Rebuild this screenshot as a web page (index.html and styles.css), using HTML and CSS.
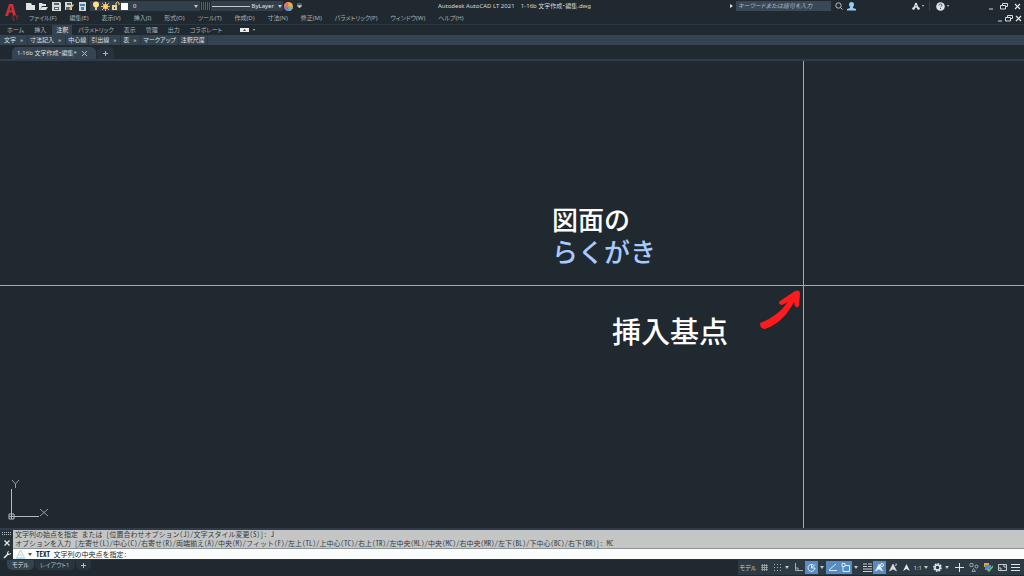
FILE: index.html
```html
<!DOCTYPE html>
<html lang="ja">
<head>
<meta charset="utf-8">
<title>Autodesk AutoCAD LT 2021</title>
<link rel="stylesheet" href="styles.css">
</head>
<body>
<div class="app">
  <header class="top">
    <button class="logo" aria-label="アプリケーション"><svg width="16" height="20" viewBox="0 0 16 20"><path d="M1 14 5 2h4l3 11-3 1-1-4-3 1-1 3zM5.500 8.500 7.500 8 7 4z" fill="#c92f36" fill-rule="evenodd"/><path d="M9 14v4h2M11.500 14h3M13 14v4" stroke="#9d2630" fill="none"/></svg></button>
    <div class="top-rows">
      <div class="titlebar">
        <div class="quick">
          <button aria-label="新規"><svg width="9" height="9" viewBox="0 0 9 9"><path d="M0 1h5l1 2h3v5H0z" fill="#dfe3e4"/></svg></button>
          <button aria-label="開く"><svg width="9" height="9" viewBox="0 0 9 9"><path d="M0 8V1h3l1 1h3v2H3L1 8zM3 5h6L7 8H1z" fill="#dfe3e4"/></svg></button>
          <button aria-label="上書き保存"><svg width="9" height="9" viewBox="0 0 9 9"><path d="M0 0h8l1 1v8H0z" fill="#d5d9da"/><path d="M2 1h5v2H2zM2 5h5v3H2z" fill="#59636b"/><path d="M3 6h3v1H3z" fill="#eee"/></svg></button>
          <button aria-label="名前を付けて保存"><svg width="9" height="9" viewBox="0 0 9 9"><path d="M0 0h7v8H0z" fill="#d5d9da"/><path d="M2 1h4v2H2zM1 5h4v3H1z" fill="#59636b"/><path d="m4 7 4-5 1 1-4 5z" fill="#eab45a"/></svg></button>
          <button aria-label="印刷"><svg width="9" height="9" viewBox="0 0 9 9"><path d="M1 0h7v9H1z" fill="#d5d9da"/><path d="M2 2h5v2H2zM3 5h3v3H3z" fill="#3c84bd"/></svg></button>
        </div>
        <button class="layer">
          <svg width="8" height="10" viewBox="0 0 8 10"><circle cx="4" cy="3.500" r="3" fill="#ffe18a"/><path d="M3 6h2v3H3z" fill="#d8ccb0"/></svg>
          <svg width="9" height="9" viewBox="0 0 9 9"><path d="M4.500 0v9M0 4.500h9M1 1l7 7M8 1 1 8" stroke="#efb646"/><circle cx="4.500" cy="4.500" r="2.500" fill="#ffd060"/></svg>
          <svg width="9" height="10" viewBox="0 0 9 10"><path d="M1 4h5v5H1z" fill="#efd396"/><path d="M5 4V2q1.500-2 3 0v2" stroke="#efd396" fill="none"/><path d="M3 6h1v2H3z" fill="#59482a"/></svg>
          <svg width="7" height="7" viewBox="0 0 7 7"><path d="M0 0h7v7H0z" fill="#fff"/></svg>
          <span class="grow">0</span><i class="caret"></i>
        </button>
        <svg width="9" height="8" viewBox="0 0 9 8"><path d="M0 1h9M0 3h9M0 5h9M0 7h9" stroke="#8a949b" stroke-dasharray="1 1"/></svg>
        <button class="linetype"><span class="rule"></span><span>ByLayer</span><i class="caret"></i></button>
        <svg width="9" height="9" viewBox="0 0 9 9"><circle cx="4.500" cy="4.500" r="4.500" fill="#f0a64c"/><path d="M4.500 4.500 0 5a4.500 4.500 0 0 1 4-5z" fill="#e66c6b"/><path d="M4.500 4.500 0 5a4.500 4.500 0 0 0 5 4z" fill="#6a7de0"/><path d="M4.500 4.500 5 9a4.500 4.500 0 0 0 4-4z" fill="#59bfa0"/></svg>
        <svg class="more" width="5" height="6" viewBox="0 0 5 6"><path d="M0 1h5M0 2.500h5L2.500 5z" fill="#cbd0d3" stroke="#cbd0d3" stroke-width=".5"/></svg>
        <h1 class="title">Autodesk AutoCAD LT 2021 &nbsp;&nbsp; 1-16b 文字作成・編集.dwg</h1>
        <div class="right-tools">
          <i class="play"></i>
          <input class="search" type="text" placeholder="キーワードまたは語句を入力" aria-label="キーワード検索">
          <button aria-label="検索"><svg width="8" height="8" viewBox="0 0 8 8"><circle cx="3.500" cy="3.500" r="2.700" fill="none" stroke="#b9c0c3"/><path d="m5.500 5.500 2 2" stroke="#b9c0c3"/></svg></button>
          <button aria-label="サインイン"><svg width="9" height="9" viewBox="0 0 9 9"><circle cx="4.500" cy="2.500" r="2.500" fill="#91cff4"/><path d="M3 4h3v2l3 1v1.500H0V7l3-1z" fill="#91cff4"/></svg></button>
          <button class="store" aria-label="App Store"><svg width="8" height="8" viewBox="0 0 8 8"><path d="M4 1 1.500 7M4 1l2.500 6M2.500 5h3" stroke="#e2e6e8" stroke-width="1.300" fill="none"/><circle cx="1.500" cy="6.500" r="1.300" fill="#e2e6e8"/><circle cx="6.500" cy="6.500" r="1.300" fill="#e2e6e8"/></svg></button><i class="caret tiny"></i>
          <span class="sep"></span>
          <button aria-label="ヘルプ"><svg width="9" height="9" viewBox="0 0 9 9"><circle cx="4.500" cy="4.500" r="4.300" fill="#dfe3e5"/><path d="M3 3.500Q3.200 2 4.500 2T6 3.300Q6 4.200 4.500 5M4.500 6v1" stroke="#46515b" fill="none"/></svg></button><i class="caret tiny"></i>
        </div>
        <div class="winbtns">
          <button aria-label="最小化"><svg width="6" height="7" viewBox="0 0 6 7"><path d="M1 6h4" stroke="#d6dadc"/></svg></button>
          <button aria-label="元に戻す"><svg width="8" height="7" viewBox="0 0 8 7"><path d="M2.500 2V.500h5v3H6M.500 2.500h5v3.500h-5z" fill="none" stroke="#d6dadc"/></svg></button>
          <button aria-label="閉じる"><svg width="7" height="7" viewBox="0 0 7 7"><path d="m1 1 5 5M6 1 1 6" stroke="#e8ebec" stroke-width="1.200"/></svg></button>
        </div>
      </div>
      <nav class="menubar">
        <button>ファイル(F)</button><button>編集(E)</button><button>表示(V)</button><button>挿入(I)</button><button>形式(O)</button><button>ツール(T)</button><button>作成(D)</button><button>寸法(N)</button><button>修正(M)</button><button>パラメトリック(P)</button><button>ウィンドウ(W)</button><button>ヘルプ(H)</button>
        <div class="winbtns small">
          <button aria-label="図面を最小化"><svg width="6" height="7" viewBox="0 0 6 7"><path d="M1 6h4" stroke="#d6dadc"/></svg></button>
          <button aria-label="図面を元に戻す"><svg width="8" height="7" viewBox="0 0 8 7"><path d="M2.500 2V.500h5v3H6M.500 2.500h5v3.500h-5z" fill="none" stroke="#d6dadc"/></svg></button>
          <button aria-label="図面を閉じる"><svg width="7" height="7" viewBox="0 0 7 7"><path d="m1 1 5 5M6 1 1 6" stroke="#e8ebec" stroke-width="1.200"/></svg></button>
        </div>
      </nav>
    </div>
  </header>
  <nav class="ribbon">
    <button>ホーム</button><button>挿入</button><button class="on">注釈</button><button>パラメトリック</button><button>表示</button><button>管理</button><button>出力</button><button>コラボレート</button>
    <button class="ribbon-state" aria-label="リボン表示"><svg width="9" height="4" viewBox="0 0 9 4"><path d="M0 0h9v4H0z" fill="#e8ebec"/><path d="M3 3h3L4.500 1z" fill="#333d46"/></svg><i class="caret tiny"></i></button>
  </nav>
  <div class="panels">
    <button>文字<b>»</b></button><button>寸法記入<b>»</b></button><button>中心線</button><button>引出線<b>»</b></button><button>表<b>»</b></button><button>マークアップ</button><button>注釈尺度</button>
  </div>
  <div class="filetabs">
    <div class="filetab"><span>1-16b 文字作成・編集*</span><button aria-label="タブを閉じる"><svg width="5" height="5" viewBox="0 0 5 5"><path d="m0 0 5 5M5 0 0 5" stroke="#b6bdc2"/></svg></button></div>
    <button class="newtab" aria-label="新規タブ"><svg width="5" height="5" viewBox="0 0 5 5"><path d="M2.500 0v5M0 2.500h5" stroke="#aab2b7"/></svg></button>
  </div>
  <main class="canvas">
    <div class="hair-v"></div><div class="hair-h"></div>
    <div class="drawing">図面の<br><span class="blue">らくがき</span></div>
    <div class="note">挿入基点</div>
    <svg class="arrow" width="44" height="42" viewBox="0 0 44 42"><path d="M1 35Q18 29 29 14L23 17Q18 16 21 13L36 3Q41 1 41 6L40 17Q39 21 36 18L35 14Q24 35 6 41 1 41 1 35z" fill="#ff1a1e"/></svg>
    <svg class="ucs" width="42" height="42" viewBox="0 0 42 42"><path d="M3.500 10v30M1 37.500h30M1 35h5v5H1z" fill="none" stroke="#b5babd"/><path d="m4 1 3.500 4L11 1M7.500 5v4M32 30l8 7M40 30l-8 7" fill="none" stroke="#959da1"/></svg>
  </main>
  <section class="command">
    <div class="cmdside">
      <svg width="9" height="3" viewBox="0 0 9 3"><path d="M0 .500h9M0 2.500h9" stroke="#b4bbc0" stroke-dasharray="1 1"/></svg>
      <button aria-label="コマンドラインを閉じる"><svg width="6" height="6" viewBox="0 0 6 6"><path d="m.5.5 5 5M5.500.5l-5 5" stroke="#e8ebec" stroke-width="1.200"/></svg></button>
      <button aria-label="カスタマイズ"><svg width="8" height="8" viewBox="0 0 8 8"><path d="m1 7 4-4" stroke="#e8ebec" stroke-width="1.600"/><path d="M5 0 4 2v2h2l2-1-.2-1L6 3 5 2 6 .2z" fill="#e8ebec"/></svg></button>
    </div>
    <div class="cmdmain">
      <div class="history"><div>文字列の始点を指定 または [位置合わせオプション(J)/文字スタイル変更(S)]: J</div><div>オプションを入力 [左寄せ(L)/中心(C)/右寄せ(R)/両端揃え(A)/中央(M)/フィット(F)/左上(TL)/上中心(TC)/右上(TR)/左中央(ML)/中央(MC)/右中央(MR)/左下(BL)/下中心(BC)/右下(BR)]: MC</div></div>
      <label class="prompt"><svg width="9" height="10" viewBox="0 0 9 10"><path d="M1 8 4.500 1 8 8M2.500 6h4" fill="none" stroke="#c9d0d2"/><path d="M0 9h9" stroke="#a5daf1" stroke-width="1.500"/></svg><i class="caret dark"></i><span><strong>TEXT</strong> 文字列の中央点を指定:</span><input type="text" aria-label="コマンド入力"></label>
    </div>
  </section>
  <footer class="bottom">
    <div class="layouts"><button class="on">モデル</button><button>レイアウト1</button><button aria-label="新規レイアウト"><svg width="5" height="5" viewBox="0 0 5 5"><path d="M2.500 0v5M0 2.500h5" stroke="#b6bdc2"/></svg></button></div>
    <div class="status">
      <button class="txt">モデル</button>
      <button aria-label="グリッド"><svg width="9" height="9" viewBox="0 0 9 9"><path d="M2.500 1v7M4.500 1v7M6.500 1v7M1 2.500h7M1 4.500h7M1 6.500h7" stroke="#a3abb0" stroke-width=".8"/></svg></button>
      <button class="sp" aria-label="スナップ"><svg width="9" height="9" viewBox="0 0 9 9"><path d="M1 1.500h7M1 4.500h7M1 7.500h7" stroke="#a9b1b5" stroke-dasharray="1 2"/></svg></button>
      <i class="caret"></i>
      <button class="sp" aria-label="直交モード"><svg width="10" height="9" viewBox="0 0 10 9"><path d="M1.500 0v7.500H9M1.500 5h2.500v3" fill="none" stroke="#a9b1b5"/></svg></button>
      <button class="hot" aria-label="極トラッキング"><svg width="9" height="9" viewBox="0 0 9 9"><path d="M6.500 2A3.500 3.500 0 1 0 8 5H4.500L8 1.500M4.500 5V2" fill="none" stroke="#e4edf6"/></svg></button>
      <i class="caret"></i>
      <button class="hot" aria-label="オブジェクトスナップトラッキング"><svg width="9" height="9" viewBox="0 0 9 9"><path d="M1 7.500h8M1 7 8 1" fill="none" stroke="#dce8f4"/></svg></button>
      <button class="hot" aria-label="オブジェクトスナップ"><svg width="9" height="9" viewBox="0 0 9 9"><path d="M4 2.500h4.500v6H2v-5M1 .500h3v3H1z" fill="none" stroke="#dce8f4"/></svg></button>
      <i class="caret"></i>
      <button class="sp" aria-label="線の太さ"><svg width="9" height="9" viewBox="0 0 9 9"><path d="M0 1h4M0 3.500h4M0 6h9M0 8.500h9M5 1h4M5 3.500h4" stroke="#c7cdd0" stroke-width="1.200"/></svg></button>
      <button class="hot" aria-label="注釈オブジェクトを表示"><svg width="9" height="9" viewBox="0 0 9 9"><path d="m4 1 3.500 7L4 6 .500 8z" fill="#edf3f8" stroke="#edf3f8" stroke-width=".6"/><circle cx="7" cy="2" r="1.500" fill="none" stroke="#edf3f8"/></svg></button>
      <button class="sp" aria-label="尺度を追加"><svg width="9" height="9" viewBox="0 0 9 9"><path d="m4 1 3.500 7L4 6 .500 8zM6 3l2-2M7 0v3" fill="#dde1e3" stroke="#dde1e3" stroke-width=".6"/></svg></button>
      <button class="sp" aria-label="注釈尺度"><svg width="9" height="9" viewBox="0 0 9 9"><path d="m4.500 1 3.500 7-3.500-2L1 8z" fill="#e0e4e6"/></svg></button>
      <button class="txt scale">1:1<i class="caret"></i></button>
      <button class="sp" aria-label="ワークスペース"><svg width="9" height="9" viewBox="0 0 9 9"><circle cx="4.500" cy="4.500" r="3.400" fill="none" stroke="#dfe3e5" stroke-width="2" stroke-dasharray="1.600 1"/><circle cx="4.500" cy="4.500" r="2.500" fill="none" stroke="#dfe3e5" stroke-width="1.500"/></svg></button>
      <i class="caret"></i>
      <button class="ml" aria-label="注釈モニター"><svg width="9" height="9" viewBox="0 0 9 9"><path d="M4.500 0v9M0 4.500h9" stroke="#e0e4e6"/></svg></button>
      <button class="ml" aria-label="オブジェクトを選択表示"><svg width="10" height="9" viewBox="0 0 10 9"><path d="M1 .500h3v3H1zM5 8.500h-2l1.500-3 2 3z" fill="none" stroke="#a9b1b5" stroke-width=".8"/><circle cx="7.500" cy="3.500" r="1.500" fill="none" stroke="#a9b1b5"/></svg></button>
      <button class="ml" aria-label="ハードウェア"><svg width="9" height="9" viewBox="0 0 9 9"><path d="M0 0h5v4H0z" fill="#d9a949"/><path d="M1 2h6v5H1z" fill="#4c8ed1"/><path d="m3 6 2 2 4-5" fill="none" stroke="#69bd5b" stroke-width="1.500"/></svg></button>
      <button class="ml" aria-label="フルスクリーン"><svg width="9" height="9" viewBox="0 0 9 9"><path d="M.500 1.500h8v6h-8zM5 3h2v2M4 6H2V4" fill="none" stroke="#c7cdd0"/></svg></button>
      <button class="sp" aria-label="カスタマイズ"><svg width="9" height="9" viewBox="0 0 9 9"><path d="M0 1.500h9M0 4.500h9M0 7.500h9" stroke="#e0e4e6"/></svg></button>
    </div>
  </footer>
</div>
</body>
</html>
```
FILE: styles.css
```css
* { box-sizing: border-box; }
body { margin: 0; background: #1f292f; color: #b3bbbf; font: 6px/10px "Noto Sans", "Noto Sans CJK JP", sans-serif; font-feature-settings: "palt"; }
button, input { font: inherit; font-feature-settings: inherit; color: inherit; background: none; border: 0; padding: 0; margin: 0; }
button { display: flex; align-items: center; white-space: nowrap; }
svg { display: block; flex: none; }
.app { height: 100vh; display: flex; flex-direction: column; overflow: hidden; }
.caret { flex: none; margin-left: 2px; border: 2px solid transparent; border-top: 3px solid #c2c8cc; border-bottom: 0; }
.caret.tiny { border-width: 2px 1px 0; }
.caret.dark { border-top-color: #4b5459; }

.top { display: flex; border-bottom: 1px solid #2b3741; height: 25px; }
.logo { width: 26px; padding-left: 4px; }
.top-rows { flex: 1; min-width: 0; }
.titlebar { display: flex; align-items: center; height: 12px; }
.quick { display: flex; gap: 4px; width: 64px; }
.layer { gap: 1px; width: 110px; height: 10px; padding: 0 2px; background: #343f4c; color: #e0e4e6; }
.layer .grow { flex: 1; text-align: left; padding-left: 4px; }
.titlebar > svg { margin-left: 1px; }
.linetype { gap: 2px; width: 72px; height: 10px; margin-left: 1px; padding: 0 1px; background: #343f4c; color: #e0e4e6; }
.rule { flex: 1; height: 1px; background: #c2c8cc; }
.titlebar > .more { margin-left: 4px; }
.title { flex: 1; margin: 0; padding-left: 136px; font: inherit; color: #d6dbdd; white-space: nowrap; }
.right-tools { display: flex; align-items: center; flex: none; }
.play { border: 2px solid transparent; border-left: 3px solid #d6dadc; border-right: 0; margin-right: 3px; }
.search { width: 95px; height: 10px; padding: 0 2px; background: #3a4757; font-style: italic; }
.search::placeholder { color: #b0b9bf; opacity: 1; }
.right-tools button { margin-left: 4px; }
.right-tools .store { margin-left: 56px; }
.sep { width: 1px; height: 10px; background: #34414b; margin: 0 2px 0 5px; }
.winbtns { display: flex; align-items: center; gap: 6px; width: 75px; justify-content: flex-end; padding-right: 3px; flex: none; }
.winbtns.small { gap: 2px; margin-left: auto; padding-right: 2px; width: auto; }
.menubar { display: flex; align-items: center; gap: 13px; height: 12px; padding-left: 3px; color: #a9b2b7; }

.ribbon { display: flex; height: 10px; padding-left: 3px; color: #a9b2b7; }
.ribbon button { padding: 0 4px; margin-right: 2px; }
.ribbon .on { background: #35424f; color: #e8ebed; }
.ribbon .ribbon-state { margin-left: 8px; gap: 2px; }
.panels { display: flex; height: 10px; background: #35424f; color: #dce0e2; padding-left: 2px; }
.panels button { padding: 0 2px; border-right: 1px solid #293540; }
.panels b { padding: 0 2px 0 4px; font-weight: 400; }
.filetabs { display: flex; height: 16px; padding: 2px 0 0 12px; border-bottom: 2px solid #303c4b; }
.filetab { display: flex; align-items: center; gap: 5px; padding: 0 9px 0 5px; background: #364350; border-radius: 5px 5px 0 0; color: #dce0e2; white-space: nowrap; }
.newtab { width: 17px; margin-left: 1px; justify-content: center; background: #27323a; border-radius: 5px 5px 0 0; }

.canvas { flex: 1; position: relative; overflow: hidden; font-family: "Noto Sans CJK JP", sans-serif; font-feature-settings: normal; color: #fff; }
.hair-v, .hair-h { position: absolute; background: #a4a9ac; }
.hair-v { left: 803px; top: 0; bottom: 0; width: 1px; }
.hair-h { top: 224px; left: 0; right: 0; height: 1px; }
.drawing { position: absolute; left: 552px; top: 142px; font-size: 26px; line-height: 32px; font-weight: 500; }
.blue { color: #a9c9ff; }
.note { position: absolute; left: 612px; top: 249px; font-size: 29px; line-height: 40px; font-weight: 500; }
.arrow { position: absolute; left: 759px; top: 227px; }
.ucs { position: absolute; left: 8px; bottom: 7px; }

.command { display: flex; border-top: 2px solid #303c4b; background: #26313a; height: 32px; }
.cmdside { width: 13px; display: flex; flex-direction: column; align-items: center; gap: 5px; padding-top: 2px; }
.cmdmain { flex: 1; min-width: 0; font-family: "Noto Sans Mono CJK JP", "Noto Sans CJK JP", monospace; font-size: 7px; color: #33393d; }
.history { height: 18px; padding-left: 2px; line-height: 9px; white-space: nowrap; background: #c4c6c5; }
.prompt { display: flex; align-items: center; height: 11px; border-top: 1px solid #8d9497; background: #fbfdfc; padding-left: 3px; gap: 1px; white-space: nowrap; }
.prompt span { padding-left: 3px; color: #1f2529; }
.prompt input { flex: 1; min-width: 0; }
.bottom { display: flex; justify-content: space-between; height: 16px; }
.layouts { display: flex; height: 10px; padding-left: 7px; gap: 1px; }
.layouts button { padding: 0 5px; background: #29343d; border-radius: 0 0 5px 5px; }
.layouts .on { background: #35424f; color: #e3e7e9; }
.status { display: flex; align-items: center; height: 15px; padding: 0 3px 0 0; background: #2d3943; }
.status button { height: 13px; padding: 0 1px; justify-content: center; }
.status .hot { background: #578cc3; padding: 0 2px; }
.status .caret { margin: 0 2px; }
.status .ml { margin-left: 3px; }
.status .sp { margin-left: 2px; }
.status .txt { padding: 0 2px; color: #d6dadc; }
.status .scale .caret { margin-right: 0; }
```
